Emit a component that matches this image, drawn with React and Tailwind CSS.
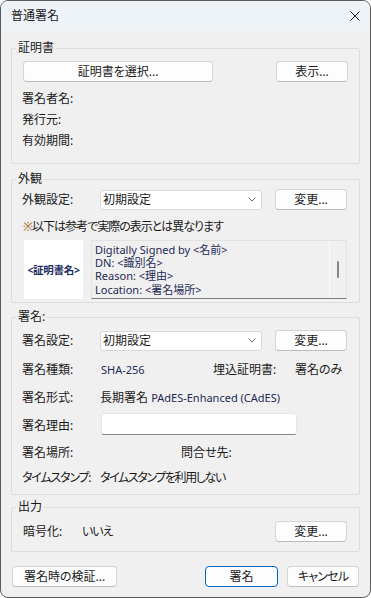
import React from "react";

function Btn({ children, className = "", primary = false }) {
  return (
    <button
      className={`flex items-center justify-center h-[21px] rounded-[4px] bg-[#fdfdfd] text-[12px] leading-[16px] text-[#1a1a1a] ${
        primary ? "border border-[#0067c0]" : "border border-[#d3d3d3] border-b-[#bcbcbc]"
      } ${className}`}
    >
      {children}
    </button>
  );
}

function Combo({ value }) {
  return (
    <div className="flex items-center justify-between w-[162px] h-[20px] bg-white border border-[#d9d9d9] rounded-[3px] pl-[2px] pr-[5px]">
      <span>{value}</span>
      <svg width="8" height="5" viewBox="0 0 8 5">
        <path d="M0.5 0.5 L4 4 L7.5 0.5" fill="none" stroke="#6b6b6b" strokeWidth="1" />
      </svg>
    </div>
  );
}

function Group({ title, className = "", children }) {
  return (
    <fieldset className={`border border-[#dcdcdc] rounded-[2px] pl-[10px] ${className}`}>
      <legend className="ml-[-6px] px-[2px] leading-[16px]">{title}</legend>
      {children}
    </fieldset>
  );
}

export default function App() {
  return (
    <div className="w-[371px] h-[598px] flex flex-col bg-[#f0f0f0] border border-[#5b5b5b] rounded-[8px] overflow-hidden text-[12px] leading-[16px] text-[#1a1a1a] font-['Noto_Sans','Noto_Sans_CJK_JP',sans-serif] [font-feature-settings:'palt']">
      {/* Title bar */}
      <div className="h-[30px] shrink-0 flex items-center justify-between pl-[10px] pr-[10px] bg-[#eef3f8]">
        <span>普通署名</span>
        <svg width="10" height="10" viewBox="0 0 10 10">
          <path d="M0.5 0.5 L9.5 9.5 M9.5 0.5 L0.5 9.5" stroke="#1a1a1a" strokeWidth="1" />
        </svg>
      </div>

      <div className="flex flex-col px-[10px]">
        {/* 証明書 */}
        <Group title="証明書" className="mt-[9px] pr-[11px] pb-[12px]">
          <div className="flex justify-between mt-[5px] ml-[1px]">
            <Btn className="w-[190px]">証明書を選択...</Btn>
            <Btn className="w-[72px]">表示...</Btn>
          </div>
          <div className="flex flex-col mt-[6px]">
            <div className="h-[21px] flex items-center">署名者名:</div>
            <div className="h-[21px] flex items-center">発行元:</div>
            <div className="h-[21px] flex items-center">有効期間:</div>
          </div>
        </Group>

        {/* 外観 */}
        <Group title="外観" className="mt-[7px] pr-[12px] pb-[3px]">
          <div className="flex items-center mt-[2px]">
            <div className="w-[78px]">外観設定:</div>
            <Combo value="初期設定" />
            <Btn className="w-[72px] h-[20px] ml-auto">変更...</Btn>
          </div>
          <div className="mt-[9px] ml-[1px] h-[16px] tracking-[-1px]">
            <span className="text-[#9a6a1c]">※</span>以下は参考で実際の表示とは異なります
          </div>
          <div className="flex mt-[5px] h-[59px]">
            <div className="ml-[2px] w-[59px] h-[59px] bg-white flex items-center justify-center text-[10.5px] font-bold text-[#1f2d62] tracking-[-0.3px]">
              &lt;証明書名&gt;
            </div>
            <div className="ml-[8px] w-[256px] h-[59px] flex border border-[#e2e2e2] border-b-[#7e7e7e] bg-[#f0f0f0]">
              <div className="flex-1 pl-[3px] pt-[2px] text-[#1e2a55] text-[11px] leading-[13.2px]">
                <div>Digitally Signed by &lt;名前&gt;</div>
                <div>DN: &lt;識別名&gt;</div>
                <div>Reason: &lt;理由&gt;</div>
                <div>Location: &lt;署名場所&gt;</div>
              </div>
              <div className="w-[17px] border-l border-[#fbfbfb] flex items-center justify-center">
                <div className="w-[2px] h-[17px] bg-[#858585] rounded-full" />
              </div>
            </div>
          </div>
        </Group>

        {/* 署名 */}
        <Group title="署名:" className="mt-[6px] pr-[12px] pb-[6px]">
          <div className="flex items-center mt-[5px]">
            <div className="w-[78px]">署名設定:</div>
            <Combo value="初期設定" />
            <Btn className="w-[72px] h-[20px] ml-auto">変更...</Btn>
          </div>
          <div className="flex items-center h-[20px] mt-[9px]">
            <div className="w-[79px]">署名種類:</div>
            <div className="w-[112px] text-[11px] text-[#1e2a55]">SHA-256</div>
            <div className="w-[82px]">埋込証明書:</div>
            <div>署名のみ</div>
          </div>
          <div className="flex items-center h-[20px] mt-[8px]">
            <div className="w-[78px]">署名形式:</div>
            <div>
              長期署名 <span className="text-[11px] text-[#1e2a55]">PAdES-Enhanced (CAdES)</span>
            </div>
          </div>
          <div className="flex items-center h-[22px] mt-[5px]">
            <div className="w-[79px] pt-[3px]">署名理由:</div>
            <div className="w-[196px] h-[22px] bg-white rounded-[3px] border border-[#e6e6e6] border-b-[#868686]" />
          </div>
          <div className="flex items-center h-[20px] mt-[8px]">
            <div className="w-[78px]">署名場所:</div>
            <div className="w-[81px]" />
            <div>問合せ先:</div>
          </div>
          <div className="flex items-center h-[20px] mt-[5px]">
            <div className="w-[78px] tracking-[-1.2px]">タイムスタンプ:</div>
            <div className="tracking-[-1.4px]">タイムスタンプを利用しない</div>
          </div>
        </Group>

        {/* 出力 */}
        <Group title="出力" className="mt-[4px] pr-[12px] pb-[9px]">
          <div className="flex items-center mt-[6px]">
            <div className="w-[59px] ml-[1px]">暗号化:</div>
            <div className="tracking-[-1px]">いいえ</div>
            <Btn className="w-[72px] h-[20px] ml-auto">変更...</Btn>
          </div>
        </Group>

        {/* Footer */}
        <div className="flex items-center mt-[14px] px-[1px]">
          <Btn className="w-[105px]">署名時の検証...</Btn>
          <Btn primary className="w-[73px] ml-auto">署名</Btn>
          <Btn className="w-[72px] ml-[9px] tracking-[-0.8px]">キャンセル</Btn>
        </div>
      </div>
    </div>
  );
}
